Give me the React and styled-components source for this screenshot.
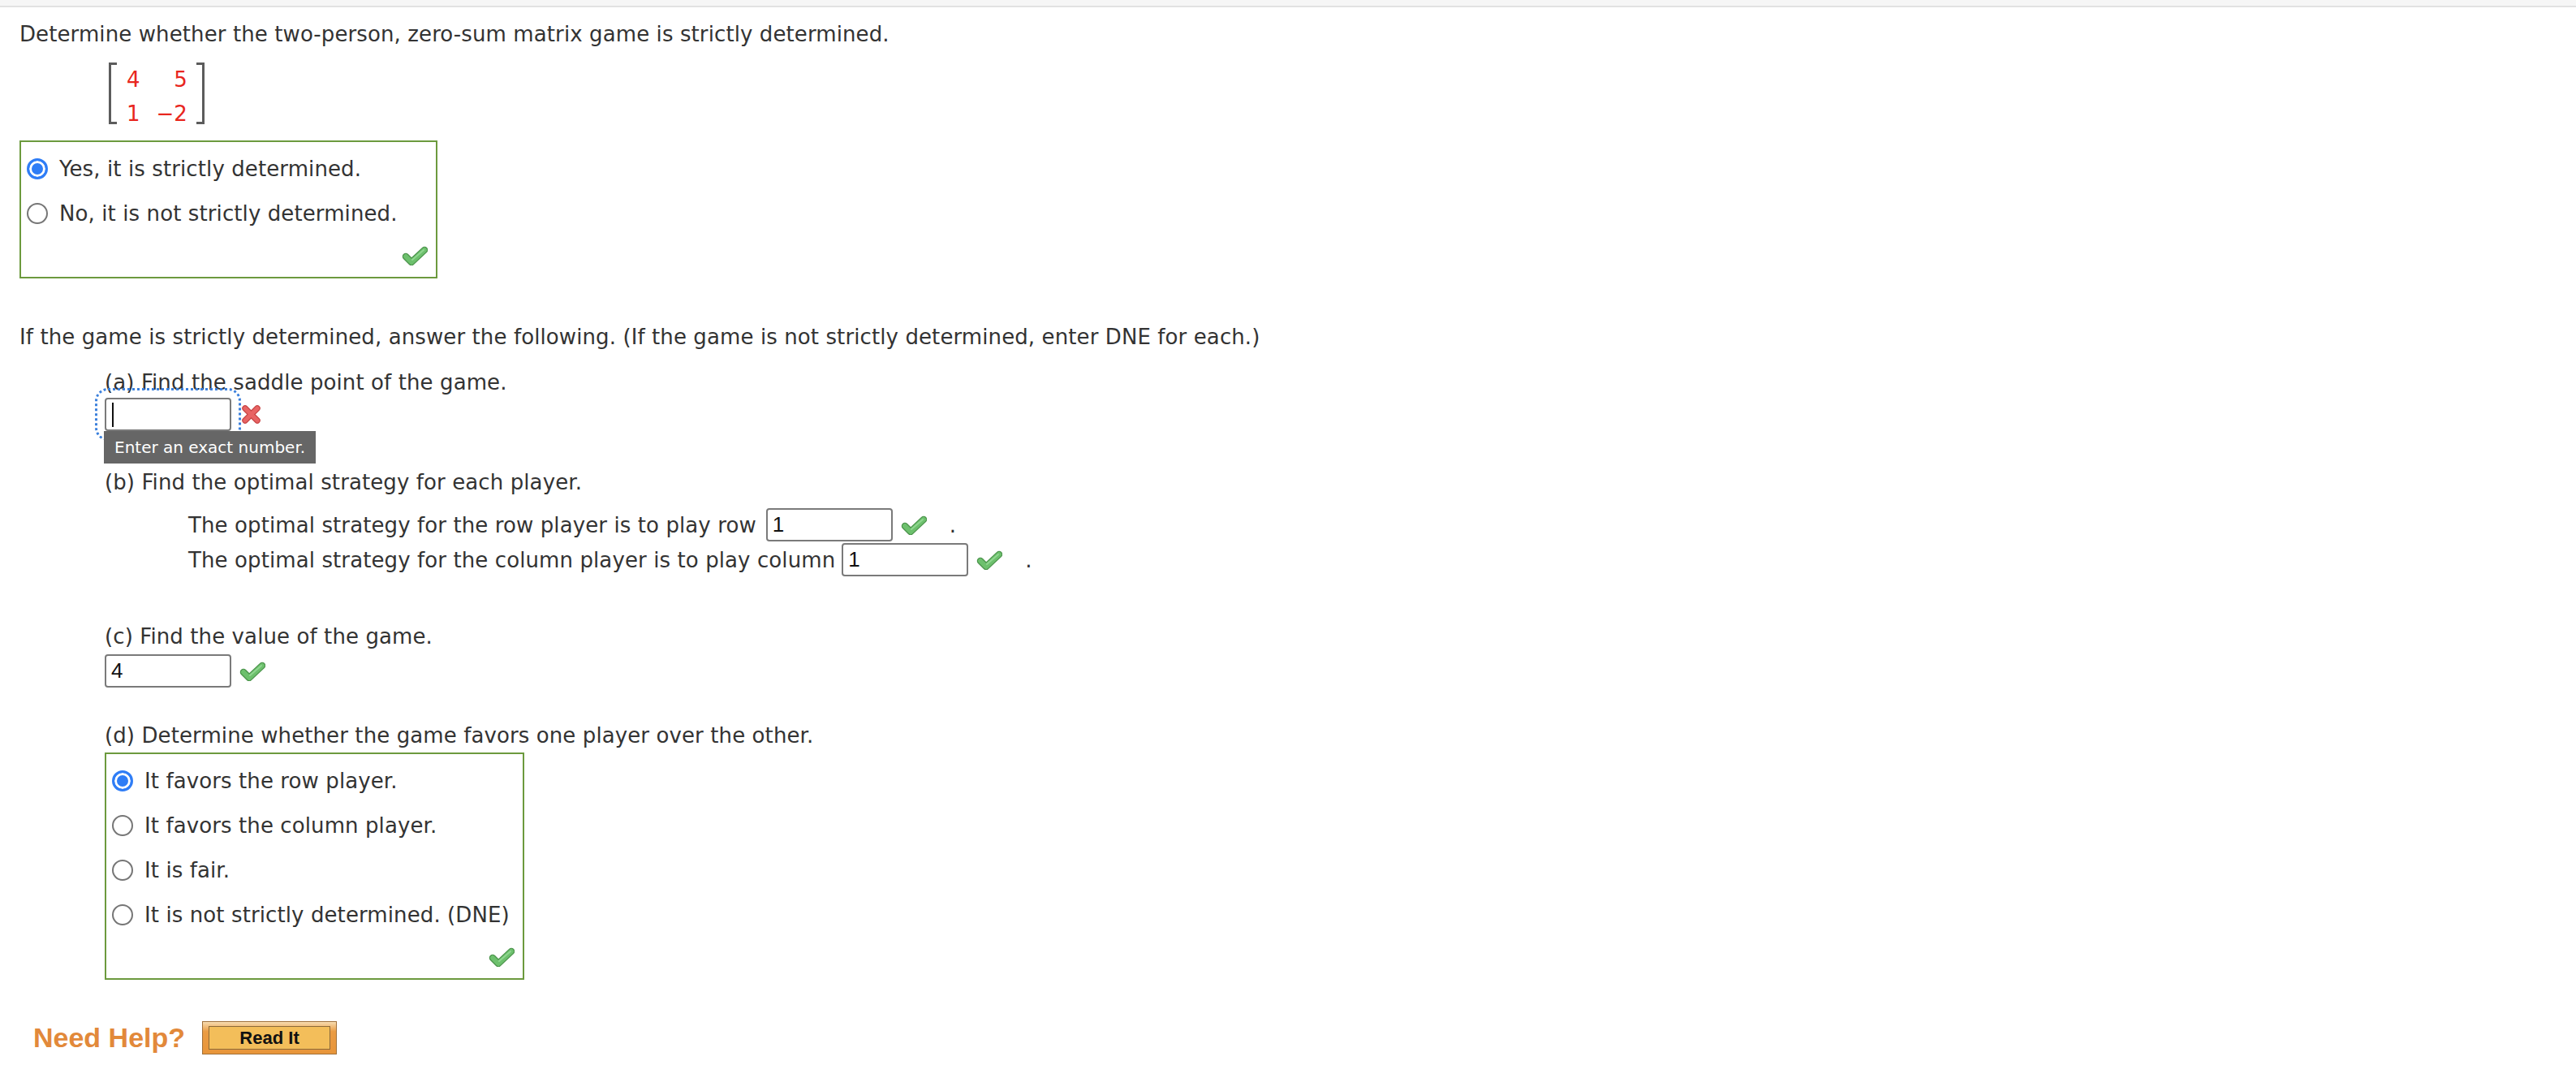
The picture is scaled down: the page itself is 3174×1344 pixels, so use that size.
import React from "react"
import styled, { createGlobalStyle } from "styled-components"

const GlobalStyle = createGlobalStyle`
  body {
    margin: 0;
    background: #fff;
    font-family: "DejaVu Sans", Verdana, sans-serif;
    font-size: 26px;
    color: #333;
  }
`

const TopBar = styled.div`
  height: 7px;
  background: #f6f6f6;
  border-bottom: 2px solid #e2e2e2;
`

const Page = styled.div`
  padding: 17px 24px 40px;
`

const Line = styled.div`
  line-height: 32px;
  margin-top: ${p => p.$mt || 0}px;
  white-space: nowrap;
  letter-spacing: 0.1px;
`

const Part = styled.div`
  margin-left: 105px;
`

const Matrix = styled.div`
  display: flex;
  align-items: flex-start;
  margin: 19px 0 0 110px;
`

const Bracket = styled.div`
  width: 7px;
  height: 70px;
  border: 3px solid #5c5c5c;
  border-${p => (p.$side === "left" ? "right" : "left")}: none;
`

const Cells = styled.div`
  display: grid;
  grid-template-columns: auto auto;
  column-gap: 20px;
  justify-items: end;
  padding: 0 11px 0 12px;
  line-height: 42px;
  color: #e8261e;
`

const ChoiceBox = styled.div`
  box-sizing: border-box;
  width: ${p => p.$width}px;
  border: 2px solid #6c9a3e;
  padding: 5px 10px 14px 7px;
  margin-top: ${p => p.$mt}px;
`

const Choice = styled.div`
  display: flex;
  align-items: center;
  gap: 14px;
  height: 55px;
  letter-spacing: 0.1px;
`

const Radio = styled.span`
  box-sizing: border-box;
  width: 26px;
  height: 26px;
  flex: none;
  border-radius: 50%;
  border: ${p => (p.$checked ? "3px solid #2f7df6" : "2px solid #767676")};
  background: ${p => (p.$checked ? "#2f7df6" : "#fff")};
  box-shadow: ${p => (p.$checked ? "inset 0 0 0 3px #fff" : "none")};
`

const CheckRow = styled.div`
  display: flex;
  justify-content: flex-end;
  margin-top: 13px;
`

const AnswerRow = styled.div`
  position: relative;
  display: flex;
  align-items: center;
  margin-top: ${p => p.$mt || 0}px;
`

const Field = styled.div`
  box-sizing: border-box;
  width: 156px;
  height: 41px;
  flex: none;
  border: 2px solid #7a7a7a;
  border-radius: 4px;
  padding: 0 6px;
  display: flex;
  align-items: center;
  font-family: "Liberation Sans", Arial, sans-serif;
  font-size: 26px;
  color: #111;
  outline: ${p => (p.$focused ? "3px dotted #3a7fdc" : "none")};
  outline-offset: 9px;
  margin-left: ${p => p.$ml || 0}px;
`

const Caret = styled.span`
  width: 2px;
  height: 30px;
  background: #111;
  margin-left: 1px;
`

const Tooltip = styled.div`
  position: absolute;
  left: -1px;
  top: 41px;
  height: 40px;
  line-height: 40px;
  padding: 0 13px;
  background: #666;
  color: #fff;
  font-size: 20px;
  white-space: nowrap;
`

const Mark = styled.span`
  display: inline-flex;
  margin-left: ${p => p.$ml || 0}px;
`

const Strategies = styled.div`
  margin: 15px 0 0 103px;
`

const StrategyRow = styled.div`
  display: flex;
  align-items: center;
  height: 43px;
  white-space: nowrap;
  letter-spacing: 0.1px;
`

const Period = styled.span`
  margin-left: 28px;
`

const HelpRow = styled.div`
  display: flex;
  align-items: center;
  margin: 51px 0 0 17px;
`

const HelpLabel = styled.span`
  font-family: "Liberation Sans", Arial, sans-serif;
  font-weight: bold;
  font-size: 34px;
  color: #e2893a;
`

const ReadButton = styled.button`
  margin-left: 21px;
  padding: 5px 7px;
  border: 1px solid #a0703a;
  background: linear-gradient(#f7dcb0, #ea9c44 30%, #e8953a);
  cursor: pointer;
`

const ReadInner = styled.span`
  display: block;
  box-sizing: border-box;
  width: 150px;
  height: 29px;
  line-height: 27px;
  border: 1px solid #8c6a3a;
  background: #f3be5a;
  font-family: "Liberation Sans", Arial, sans-serif;
  font-weight: bold;
  font-size: 22px;
  color: #111;
  text-align: center;
`

const CheckIcon = () => (
  <svg width="32" height="24" viewBox="0 0 32 24">
    <path d="M5 13 L12 20 L28 5" fill="none" stroke="#4b934b" strokeWidth="8.5" strokeLinecap="round" strokeLinejoin="round" />
    <path d="M5 13 L12 20 L28 5" fill="none" stroke="#6dc06d" strokeWidth="6" strokeLinecap="round" strokeLinejoin="round" />
    <path d="M13 17 L27 5" fill="none" stroke="#8fd68f" strokeWidth="2" strokeLinecap="round" />
  </svg>
)

const CrossIcon = () => (
  <svg width="25" height="25" viewBox="0 0 25 25">
    <path d="M5 5 L20 20 M20 5 L5 20" stroke="#c94646" strokeWidth="7.5" strokeLinecap="round" />
    <path d="M5 5 L20 20 M20 5 L5 20" stroke="#e86464" strokeWidth="5" strokeLinecap="round" />
  </svg>
)

const ChoiceList = ({ options, selected, width, mt }) => (
  <ChoiceBox $width={width} $mt={mt}>
    {options.map((o, i) => (
      <Choice key={o}>
        <Radio $checked={i === selected} />
        <span>{o}</span>
      </Choice>
    ))}
    <CheckRow>
      <CheckIcon />
    </CheckRow>
  </ChoiceBox>
)

const App = () => {
  return (
    <>
      <GlobalStyle />
      <TopBar />
      <Page>
        <Line>Determine whether the two-person, zero-sum matrix game is strictly determined.</Line>
        <Matrix>
          <Bracket $side="left" />
          <Cells>
            <span>4</span>
            <span>5</span>
            <span>1</span>
            <span>−2</span>
          </Cells>
          <Bracket $side="right" />
        </Matrix>
        <ChoiceList
          width={515}
          mt={12}
          selected={0}
          options={["Yes, it is strictly determined.", "No, it is not strictly determined."]}
        />

        <Line $mt={56}>
          If the game is strictly determined, answer the following. (If the game is not strictly determined, enter DNE for each.)
        </Line>

        <Part>
          <Line $mt={24}>(a) Find the saddle point of the game.</Line>
          <AnswerRow $mt={3}>
            <Field $focused>
              <Caret />
            </Field>
            <Mark $ml={12}>
              <CrossIcon />
            </Mark>
            <Tooltip>Enter an exact number.</Tooltip>
          </AnswerRow>

          <Line $mt={47}>(b) Find the optimal strategy for each player.</Line>
          <Strategies>
            <StrategyRow>
              The optimal strategy for the row player is to play row
              <Field $ml={12}>1</Field>
              <Mark $ml={10}>
                <CheckIcon />
              </Mark>
              <Period>.</Period>
            </StrategyRow>
            <StrategyRow>
              The optimal strategy for the column player is to play column
              <Field $ml={8}>1</Field>
              <Mark $ml={10}>
                <CheckIcon />
              </Mark>
              <Period>.</Period>
            </StrategyRow>
          </Strategies>

          <Line $mt={57}>(c) Find the value of the game.</Line>
          <AnswerRow $mt={6}>
            <Field>4</Field>
            <Mark $ml={10}>
              <CheckIcon />
            </Mark>
          </AnswerRow>

          <Line $mt={43}>(d) Determine whether the game favors one player over the other.</Line>
          <ChoiceList
            width={517}
            mt={5}
            selected={0}
            options={[
              "It favors the row player.",
              "It favors the column player.",
              "It is fair.",
              "It is not strictly determined. (DNE)",
            ]}
          />
        </Part>

        <HelpRow>
          <HelpLabel>Need Help?</HelpLabel>
          <ReadButton>
            <ReadInner>Read It</ReadInner>
          </ReadButton>
        </HelpRow>
      </Page>
    </>
  )
}

export default App
